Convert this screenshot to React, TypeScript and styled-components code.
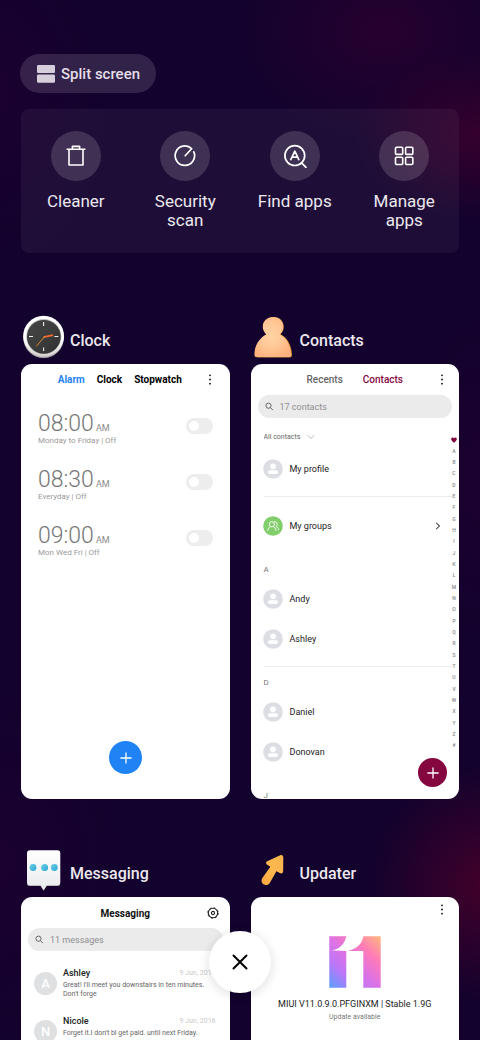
import React from "react";
import styled, { createGlobalStyle } from "styled-components";

const GlobalStyle = createGlobalStyle`
  * { box-sizing: border-box; }
  html, body, #root { height: 100%; }
  body {
    margin: 0;
    overflow: hidden;
    background: #12022d;
    font-family: Roboto, "Noto Sans", sans-serif;
  }
  button, input, select { font-family: inherit; }
  button { border: 0; padding: 0; background: none; color: inherit; cursor: pointer; }
  h1, h2, h3, p, ul { margin: 0; padding: 0; }
  svg { display: block; flex: none; }
`;

const Screen = styled.main`
  position: relative;
  height: 100vh;
  overflow: hidden;
  padding: 54px 21px 0;
  color: #fff;
  background:
    radial-gradient(ellipse 130px 85px at 101% 13%, rgba(64, 0, 44, 0.8), transparent),
    radial-gradient(ellipse 150px 110px at 80% 3%, rgba(46, 0, 48, 0.75), transparent),
    radial-gradient(ellipse 120px 120px at 102% 85%, rgba(72, 0, 42, 0.9), transparent),
    radial-gradient(ellipse 110px 180px at 0% 9%, rgba(30, 0, 48, 0.7), transparent),
    radial-gradient(ellipse 140px 200px at 0% 83%, rgba(30, 0, 48, 0.7), transparent),
    radial-gradient(ellipse 80px 180px at 100% 46%, rgba(32, 0, 48, 0.7), transparent),
    #12022d;
`;

const SplitButton = styled.button`
  display: flex;
  align-items: center;
  gap: 6px;
  height: 39px;
  margin-left: -1px;
  padding: 0 16px 0 17px;
  border-radius: 20px;
  background: rgba(255, 255, 255, 0.13);
  color: #e4dfe8;
  font-size: 15px;
  font-weight: 500;
`;

const ToolPanel = styled.section`
  display: grid;
  grid-template-columns: repeat(4, 1fr);
  height: 144px;
  margin-top: 16px;
  padding-top: 22px;
  border-radius: 8px;
  background: rgba(255, 255, 255, 0.05);
`;

const Tool = styled.button`
  display: flex;
  flex-direction: column;
  align-items: center;
  gap: 11px;
  color: #ece8ef;
  font-size: 17px;
  line-height: 19px;
`;

const ToolCircle = styled.span`
  display: grid;
  place-items: center;
  width: 50px;
  height: 50px;
  border-radius: 50%;
  background: rgba(255, 255, 255, 0.15);
`;

const ToolLabel = styled.span`
  max-width: 80px;
`;

const AppGrid = styled.div`
  display: grid;
  grid-template-columns: 1fr 1fr;
  gap: 49px 21px;
  margin-top: 62px;
`;

const AppHeader = styled.header`
  display: flex;
  align-items: center;
  gap: 4px;
  height: 49px;
  padding: 0 0 5px 1px;
`;

const AppName = styled.h2`
  padding-top: 8px;
  color: #ece8ef;
  font-size: 16px;
  font-weight: 500;
  line-height: 20px;
`;

const Card = styled.article`
  position: relative;
  height: 435px;
  overflow: hidden;
  border-radius: 11px;
  background: #fff;
  color: #222;
`;

const TopBar = styled.div`
  display: flex;
  align-items: center;
  justify-content: center;
  height: 31px;
  padding-top: 1px;
`;

const Tabs = styled.nav<{ $gap: number; $shift?: number }>`
  display: flex;
  gap: ${(p) => p.$gap}px;
  padding-right: ${(p) => p.$shift ?? 0}px;
`;

const Tab = styled.button<{ $color: string; $weight: number }>`
  color: ${(p) => p.$color};
  font-size: 10px;
  font-weight: ${(p) => p.$weight};
  line-height: 14px;
`;

const BarAction = styled.button<{ $right: number; $top?: number }>`
  position: absolute;
  top: ${(p) => p.$top ?? 9}px;
  right: ${(p) => p.$right}px;
`;

const BarTitle = styled.h3`
  color: #111;
  font-size: 10px;
  font-weight: 700;
`;

const Fab = styled.button<{ $color: string; $size: number }>`
  display: grid;
  place-items: center;
  width: ${(p) => p.$size}px;
  height: ${(p) => p.$size}px;
  border-radius: 50%;
  background: ${(p) => p.$color};
`;

const ClockFab = styled(Fab)`
  position: absolute;
  bottom: 25px;
  left: 50%;
  margin-left: -16px;
`;

const ContactFab = styled(Fab)`
  position: absolute;
  right: 12px;
  bottom: 12px;
`;

const AlarmList = styled.ul`
  list-style: none;
  padding: 17px 17px 0;
`;

const Alarm = styled.li`
  display: flex;
  align-items: flex-start;
  justify-content: space-between;
  height: 56px;
  color: #777;
`;

const AlarmTime = styled.div`
  display: flex;
  align-items: baseline;
  gap: 2px;
  height: 24px;
  font-size: 23px;
  font-weight: 300;
  line-height: 24px;
`;

const Meridiem = styled.span`
  color: #8a8a8a;
  font-size: 9px;
  font-weight: 400;
  line-height: 10px;
`;

const AlarmNote = styled.p`
  color: #999;
  font-size: 8px;
  line-height: 10px;
`;

const Toggle = styled.input`
  appearance: none;
  display: flex;
  align-items: center;
  width: 27px;
  height: 16px;
  margin: 6px 0 0;
  padding: 0 3px;
  border-radius: 8px;
  background: #ededed;
  &::before {
    content: "";
    width: 10px;
    height: 10px;
    border-radius: 50%;
    background: #fff;
  }
  &:checked { justify-content: flex-end; background: #1f82f5; }
`;

const SearchBox = styled.label`
  display: flex;
  align-items: center;
  gap: 6px;
  height: 23px;
  margin: 0 7px;
  padding: 0 7px;
  border-radius: 12px;
  background: #ebebeb;
`;

const SearchInput = styled.input`
  flex: 1;
  min-width: 0;
  padding: 0;
  border: 0;
  outline: 0;
  background: none;
  color: #333;
  font-size: 9px;
  &::placeholder { color: #8f8f8f; opacity: 1; }
`;

const Filter = styled.label`
  display: flex;
  align-items: center;
  gap: 6px;
  height: 14px;
  margin: 12px 0 0 13px;
`;

const FilterSelect = styled.select`
  appearance: none;
  padding: 0;
  border: 0;
  background: none;
  color: #666;
  font-size: 7px;
`;

const Group = styled.section<{ $first?: boolean; $line?: boolean }>`
  margin: 0 6px 0 13px;
  padding: ${(p) => (p.$first ? 5 : 9)}px 0 7px;
  border-bottom: 1px solid ${(p) => (p.$line ? "#ececec" : "transparent")};
`;

const GroupLetter = styled.h3`
  margin-bottom: 2px;
  color: #777;
  font-size: 8px;
  font-weight: 400;
  line-height: 14px;
`;

const Contact = styled.div`
  display: flex;
  align-items: center;
  gap: 7px;
  height: 40px;
  margin-left: -1px;
  padding-right: 12px;
  color: #222;
  font-size: 9px;
`;

const ContactName = styled.span`
  flex: 1;
`;

const LetterIndex = styled.nav`
  position: absolute;
  top: 70px;
  right: 0;
  display: flex;
  flex-direction: column;
  align-items: center;
  justify-content: space-between;
  width: 10px;
  height: 317px;
`;

const IndexLink = styled.a`
  display: grid;
  place-items: center;
  height: 11px;
  color: #888;
  font-size: 5px;
  font-weight: 500;
  text-decoration: none;
`;

const MessageList = styled.ul`
  list-style: none;
  padding: 8px 14px 0 13px;
`;

const Message = styled.li`
  display: flex;
  align-items: center;
  gap: 6px;
  height: 48px;
`;

const Initial = styled.span`
  display: grid;
  place-items: center;
  flex: none;
  width: 23px;
  height: 23px;
  border-radius: 50%;
  background: #dfe0e2;
  color: #fff;
  font-size: 13px;
  font-weight: 500;
`;

const MessageBody = styled.div`
  flex: 1;
  min-width: 0;
  height: 34px;
`;

const MessageTop = styled.div`
  display: flex;
  align-items: center;
  justify-content: space-between;
  line-height: 14px;
`;

const Sender = styled.h3`
  color: #222;
  font-size: 9px;
  font-weight: 500;
`;

const MessageDate = styled.time`
  color: #c8c8c8;
  font-size: 7px;
`;

const MessageText = styled.p`
  margin-top: 1px;
  color: #666;
  font-size: 7px;
  line-height: 9px;
`;

const Update = styled.div`
  display: flex;
  flex-direction: column;
  align-items: center;
  padding-top: 8px;
`;

const Version = styled.p`
  margin-top: 9px;
  color: #222;
  font-size: 9px;
  line-height: 14px;
`;

const UpdateState = styled.p`
  color: #777;
  font-size: 7px;
  line-height: 12px;
`;

const CloseAll = styled.button`
  position: absolute;
  bottom: 47px;
  left: 50%;
  display: grid;
  place-items: center;
  width: 62px;
  height: 62px;
  margin-left: -31px;
  border-radius: 50%;
  background: #fff;
  box-shadow: 0 2px 12px rgba(0, 0, 0, 0.14);
`;

const SplitIcon = () => (
  <svg width="18" height="18" viewBox="0 0 18 18" fill="#d6cfdb">
    <rect width="18" height="8" rx="1.3" />
    <rect y="9.6" width="18" height="8.2" rx="1.3" />
  </svg>
);

const TrashIcon = () => (
  <svg width="24" height="24" viewBox="0 0 24 24" fill="none" stroke="#fff" strokeWidth="1.6" strokeLinejoin="round">
    <path d="M2.6 5.2H21.4M5 5.2V21H19V5.2M8.4 5V2.4H15.6V5" />
  </svg>
);

const ScanIcon = () => (
  <svg width="24" height="24" viewBox="0 0 24 24" fill="none" stroke="#fff" strokeWidth="1.7" strokeLinecap="round" strokeLinejoin="round">
    <path d="M12.200 11.700L18.600 4.700A9.700 9.700 0 1 0 20.800 7.900" />
  </svg>
);

const FindIcon = () => (
  <svg width="24" height="24" viewBox="0 0 24 24" fill="none" stroke="#fff" strokeWidth="1.7" strokeLinecap="round" strokeLinejoin="round">
    <circle cx="11.8" cy="11.6" r="9.9" />
    <path d="M18.600 18.800L23 23.300M7.800 15.600L11.800 7.200L15.800 15.600M9.100 13.200H14.500" />
  </svg>
);

const ManageIcon = () => (
  <svg width="24" height="24" viewBox="0 0 24 24" fill="none" stroke="#fff" strokeWidth="1.6">
    <rect x="3.5" y="3.2" width="7.2" height="7.2" rx="1" />
    <rect x="13.6" y="3.2" width="7.2" height="7.2" rx="1" />
    <rect x="3.5" y="13.3" width="7.2" height="7.2" rx="1" />
    <rect x="13.6" y="13.3" width="7.2" height="7.2" rx="1" />
  </svg>
);

const ClockLogo = () => (
  <svg width="44" height="44" viewBox="0 0 44 44">
    <defs>
      <linearGradient id="rim" x1="0" y1="0" x2="0" y2="1">
        <stop offset="0.6" stopColor="#fff" />
        <stop offset="1" stopColor="#d2ceca" />
      </linearGradient>
      <linearGradient id="face" x1="0" y1="0" x2="1" y2="1">
        <stop offset="0" stopColor="#444" />
        <stop offset="0.5" stopColor="#3d3d3d" />
        <stop offset="1" stopColor="#303030" />
      </linearGradient>
    </defs>
    <ellipse cx="21.6" cy="22.2" rx="20.4" ry="20.9" fill="#a9a5a5" />
    <ellipse cx="21.6" cy="21.2" rx="20.4" ry="20.5" fill="url(#rim)" />
    <circle cx="21.8" cy="21.6" r="17.5" fill="#bdbdbd" />
    <circle cx="21.8" cy="21.8" r="16.9" fill="url(#face)" />
    <path d="M21.6 7V11M21.6 32.5V36M7 21.5H11M32.4 21.5H36.4" stroke="#eee" strokeWidth="1.1" />
    <path d="M21.5 22.2L31 20.2" stroke="#f26a2b" strokeWidth="1.7" />
    <path d="M23 21L14.5 31.2" stroke="#d98a35" strokeWidth="1" />
  </svg>
);

const PersonLogo = () => (
  <svg width="44" height="44" viewBox="0 0 44 44">
    <defs>
      <radialGradient id="skin" cx="0.45" cy="0.45" r="0.6">
        <stop offset="0" stopColor="#ffd3a4" />
        <stop offset="0.55" stopColor="#ffc795" />
        <stop offset="1" stopColor="#ffb27e" />
      </radialGradient>
    </defs>
    <path
      d="M21.6 2C15.6 2 11.2 6.3 11.2 11.6C11.2 15 12.8 17.6 14.6 19.4C7.6 23.2 3.4 30.4 3.2 39.4C3.2 41.4 4.2 42.4 6 42.4H37.2C39.4 42.4 40.2 41.4 40 39.2C39.4 29.8 35.2 22.8 28.6 19.3C30.4 17.6 31.8 15 31.8 11.6C31.8 6.2 27.4 2 21.6 2Z"
      fill="#d08a36"
    />
    <path
      d="M21.2 2C15.200 2 10.800 6.300 10.800 11.600C10.800 15 12.400 17.600 14.200 19.400C7 23.200 2.600 30.400 2.400 39.400C2.400 41.200 3.200 42 5 42H36.600C38.600 42 39.300 41 39.100 39.200C38.500 29.800 34.200 22.800 27.900 19.300C29.800 17.600 31.200 15 31.200 11.600C31.200 6.200 27 2 21.200 2Z"
      fill="url(#skin)"
    />
  </svg>
);

const BubbleLogo = () => (
  <svg width="44" height="44" viewBox="0 0 44 44">
    <defs>
      <linearGradient id="bubble" x1="0" y1="0" x2="0" y2="1">
        <stop offset="0" stopColor="#fff" />
        <stop offset="1" stopColor="#e9eaec" />
      </linearGradient>
      <linearGradient id="dot" x1="0" y1="0" x2="1" y2="1">
        <stop offset="0" stopColor="#6fd0e4" />
        <stop offset="1" stopColor="#2aa5d4" />
      </linearGradient>
    </defs>
    <path d="M5 35.5H38.3Q38 38 35.4 38H24.6L21.6 42.8L18.6 38H8Q5.200 38 5 35.500Z" fill="#bcbcc0" />
    <path d="M8 2.200H35.300Q38.300 2.200 38.300 5.200V34.200Q38.300 37 35.300 37H24.800L21.600 42L18.400 37H8Q5 37 5 34.200V5.200Q5 2.200 8 2.200Z" fill="url(#bubble)" />
    <circle cx="11" cy="19.500" r="3.400" fill="url(#dot)" />
    <circle cx="22.600" cy="19.500" r="3.500" fill="url(#dot)" />
    <circle cx="32.300" cy="19.500" r="3.400" fill="url(#dot)" />
  </svg>
);

const ArrowLogo = () => (
  <svg width="44" height="44" viewBox="0 0 44 44">
    <defs>
      <linearGradient id="arrow" x1="0" y1="1" x2="1" y2="0">
        <stop offset="0" stopColor="#ffa73f" />
        <stop offset="0.500" stopColor="#ffb84e" />
        <stop offset="1" stopColor="#f4b44c" />
      </linearGradient>
    </defs>
    <path
      d="M28.200 7.200L15.200 13.200C13.600 14.200 13.700 15.800 15.200 16.700L18.400 18.800L10.500 29.800C8.800 32.400 9.400 35 11.400 36.300C13.800 37.800 16.400 37.200 17.900 34.800L24.400 23.200L27.800 25.100C29.800 25.900 31.200 25 31.200 22.800L31.300 9.600C31.200 7.200 29.900 6.400 28.200 7.200Z"
      fill="url(#arrow)"
    />
  </svg>
);

const MoreIcon = () => (
  <svg width="4" height="13" viewBox="0 0 4 13" fill="#111">
    <circle cx="2" cy="2.300" r="0.900" />
    <circle cx="2" cy="6.500" r="0.900" />
    <circle cx="2" cy="10.700" r="0.900" />
  </svg>
);

const GearIcon = () => (
  <svg width="14" height="14" viewBox="0 0 14 14" fill="none" stroke="#222">
    <circle cx="7" cy="7" r="4.700" strokeWidth="1.100" />
    <circle cx="7" cy="7" r="5.300" strokeWidth="0.900" strokeDasharray="1.900 2.262" />
    <circle cx="7" cy="7" r="1.600" strokeWidth="1.100" />
  </svg>
);

const SearchIcon = () => (
  <svg width="9" height="9" viewBox="0 0 9 9" fill="none" stroke="#666" strokeWidth="1">
    <circle cx="3.500" cy="3.700" r="2.600" />
    <path d="M5.400 5.600L7.900 8.100" />
  </svg>
);

const DownIcon = () => (
  <svg width="8" height="6" viewBox="0 0 8 6" fill="none" stroke="#aaa" strokeWidth="0.800">
    <path d="M0.600 1.200L4 4.600L7.400 1.200" />
  </svg>
);

const RightIcon = () => (
  <svg width="6" height="8" viewBox="0 0 6 8" fill="none" stroke="#555" strokeWidth="1.100">
    <path d="M1.200 0.800L4.500 4L1.200 7.200" />
  </svg>
);

const PlusIcon = ({ size }: { size: number }) => (
  <svg width={size} height={size} viewBox="0 0 12 12" stroke="#fff" strokeWidth="1.300">
    <path d="M6 0.400V11.600M0.400 6H11.600" />
  </svg>
);

const Avatar = () => (
  <svg width="20" height="20" viewBox="0 0 20 20">
    <circle cx="10" cy="10" r="9.800" fill="#dcdee4" />
    <circle cx="10" cy="7.300" r="2.900" fill="#fff" />
    <rect x="5" y="11.200" width="10" height="3.800" rx="1.800" fill="#fff" />
  </svg>
);

const GroupAvatar = () => (
  <svg width="20" height="20" viewBox="0 0 20 20" fill="none" stroke="#fff" strokeWidth="0.900" strokeLinecap="round">
    <circle cx="10" cy="10" r="9.800" fill="#82cd6c" stroke="none" />
    <circle cx="8.900" cy="8.300" r="2.600" />
    <path d="M4.900 14.400C5.100 12.400 6 11.200 7.300 10.700M10.500 10.700C11.800 11.200 12.800 12.400 13 14.400M11 5.900C13 5.200 14.500 6.600 14.200 8.400C14.100 9.300 13.700 9.900 13 10.400C14.400 11 15.300 12 15.500 13.500" />
  </svg>
);

const HeartIcon = () => (
  <svg width="6" height="6" viewBox="0 0 6 6" fill="#85073f">
    <path d="M3 5.800C1.200 4.400 0.200 3.300 0.200 2C0.200 0.400 2.100 0 3 1.200C3.900 0 5.800 0.400 5.800 2C5.800 3.300 4.800 4.400 3 5.800Z" />
  </svg>
);

const ElevenLogo = () => (
  <svg width="52" height="52" viewBox="0 0 52 52" role="img" aria-label="MIUI 11">
    <defs>
      <linearGradient id="eleven" gradientUnits="userSpaceOnUse" x1="2" y1="52" x2="50" y2="2">
        <stop offset="0" stopColor="#5c9dff" />
        <stop offset="0.280" stopColor="#bd76f8" />
        <stop offset="0.500" stopColor="#dc72e4" />
        <stop offset="0.750" stopColor="#ff7bb8" />
        <stop offset="1" stopColor="#ffb283" />
      </linearGradient>
    </defs>
    <path
      d="M0.300 0.300H17.300C16 7 11 13.600 2.800 14.300H0.300ZM0.300 14.300L17.300 15V51.700H0.300ZM34.300 0.300H51.700V51.700H34.300V14.900H19C28 13.200 33.400 7.200 34.300 0.300Z"
      fill="url(#eleven)"
    />
  </svg>
);

const CloseIcon = () => (
  <svg width="16" height="16" viewBox="0 0 16 16" stroke="#000" strokeWidth="2" strokeLinecap="round">
    <path d="M1.500 1.500L14.500 14.500M14.500 1.500L1.500 14.500" />
  </svg>
);

const tools = [
  { label: "Cleaner", icon: <TrashIcon /> },
  { label: "Security scan", icon: <ScanIcon /> },
  { label: "Find apps", icon: <FindIcon /> },
  { label: "Manage apps", icon: <ManageIcon /> },
];

const alarms = [
  { time: "08:00", note: "Monday to Friday | Off" },
  { time: "08:30", note: "Everyday | Off" },
  { time: "09:00", note: "Mon Wed Fri | Off" },
];

const contactGroups = [
  { letter: "A", names: ["Andy", "Ashley"], line: true },
  { letter: "D", names: ["Daniel", "Donovan"], line: false },
  { letter: "J", names: [], line: false },
];

const messages = [
  { from: "Ashley", text: "Great! I'll meet you downstairs in ten minutes. Don't forge" },
  { from: "Nicole", text: "Forget it.I don't bl get paid. until next Friday." },
];

const AppWindow = ({ name, logo, children }: { name: string; logo: React.ReactNode; children: React.ReactNode }) => (
  <section>
    <AppHeader>
      {logo}
      <AppName>{name}</AppName>
    </AppHeader>
    <Card>{children}</Card>
  </section>
);

const MoreButton = ({ right, top }: { right: number; top?: number }) => (
  <BarAction $right={right} $top={top} aria-label="More options">
    <MoreIcon />
  </BarAction>
);

const ClockApp = () => (
  <>
    <TopBar>
      <Tabs $gap={12} $shift={11}>
        <Tab $color="#1f82f5" $weight={700}>Alarm</Tab>
        <Tab $color="#000" $weight={700}>Clock</Tab>
        <Tab $color="#000" $weight={700}>Stopwatch</Tab>
      </Tabs>
      <MoreButton right={18} />
    </TopBar>
    <AlarmList>
      {alarms.map((a) => (
        <Alarm key={a.time}>
          <div>
            <AlarmTime>
              {a.time}
              <Meridiem>AM</Meridiem>
            </AlarmTime>
            <AlarmNote>{a.note}</AlarmNote>
          </div>
          <Toggle type="checkbox" aria-label={`Alarm ${a.time}`} />
        </Alarm>
      ))}
    </AlarmList>
    <ClockFab $color="#1f82f5" $size={33} aria-label="Add alarm">
      <PlusIcon size={12} />
    </ClockFab>
  </>
);

const ContactsApp = () => (
  <>
    <TopBar>
      <Tabs $gap={20}>
        <Tab $color="#666" $weight={500}>Recents</Tab>
        <Tab $color="#85073f" $weight={500}>Contacts</Tab>
      </Tabs>
      <MoreButton right={15} />
    </TopBar>
    <SearchBox>
      <SearchIcon />
      <SearchInput type="search" placeholder="17 contacts" aria-label="Search contacts" />
    </SearchBox>
    <Filter>
      <FilterSelect aria-label="Contact filter">
        <option>All contacts</option>
      </FilterSelect>
      <DownIcon />
    </Filter>
    <Group $first $line>
      <Contact>
        <Avatar />
        <ContactName>My profile</ContactName>
      </Contact>
    </Group>
    <Group>
      <Contact>
        <GroupAvatar />
        <ContactName>My groups</ContactName>
        <RightIcon />
      </Contact>
    </Group>
    {contactGroups.map((g) => (
      <Group key={g.letter} $line={g.line}>
        <GroupLetter>{g.letter}</GroupLetter>
        {g.names.map((n) => (
          <Contact key={n}>
            <Avatar />
            <ContactName>{n}</ContactName>
          </Contact>
        ))}
      </Group>
    ))}
    <LetterIndex aria-label="Jump to letter">
      <IndexLink href="#favourites" aria-label="Favourites">
        <HeartIcon />
      </IndexLink>
      {"ABCDEFGHIJKLMNOPQRSTUVWXYZ#".split("").map((l) => (
        <IndexLink key={l} href={`#${l}`}>{l}</IndexLink>
      ))}
    </LetterIndex>
    <ContactFab $color="#85073f" $size={29} aria-label="Add contact">
      <PlusIcon size={12} />
    </ContactFab>
  </>
);

const MessagingApp = () => (
  <>
    <TopBar>
      <BarTitle>Messaging</BarTitle>
      <BarAction $right={10} aria-label="Settings">
        <GearIcon />
      </BarAction>
    </TopBar>
    <SearchBox>
      <SearchIcon />
      <SearchInput type="search" placeholder="11 messages" aria-label="Search messages" />
    </SearchBox>
    <MessageList>
      {messages.map((m) => (
        <Message key={m.from}>
          <Initial>{m.from[0]}</Initial>
          <MessageBody>
            <MessageTop>
              <Sender>{m.from}</Sender>
              <MessageDate>9 Jun, 2016</MessageDate>
            </MessageTop>
            <MessageText>{m.text}</MessageText>
          </MessageBody>
        </Message>
      ))}
    </MessageList>
  </>
);

const UpdaterApp = () => (
  <>
    <TopBar>
      <MoreButton right={15} top={6} />
    </TopBar>
    <Update>
      <ElevenLogo />
      <Version>MIUI V11.0.9.0.PFGINXM | Stable 1.9G</Version>
      <UpdateState>Update available</UpdateState>
    </Update>
  </>
);

export default function App() {
  return (
    <>
      <GlobalStyle />
      <Screen>
        <SplitButton>
          <SplitIcon />
          Split screen
        </SplitButton>
        <ToolPanel aria-label="Tools">
          {tools.map((t) => (
            <Tool key={t.label}>
              <ToolCircle>{t.icon}</ToolCircle>
              <ToolLabel>{t.label}</ToolLabel>
            </Tool>
          ))}
        </ToolPanel>
        <AppGrid>
          <AppWindow name="Clock" logo={<ClockLogo />}>
            <ClockApp />
          </AppWindow>
          <AppWindow name="Contacts" logo={<PersonLogo />}>
            <ContactsApp />
          </AppWindow>
          <AppWindow name="Messaging" logo={<BubbleLogo />}>
            <MessagingApp />
          </AppWindow>
          <AppWindow name="Updater" logo={<ArrowLogo />}>
            <UpdaterApp />
          </AppWindow>
        </AppGrid>
        <CloseAll aria-label="Close all apps">
          <CloseIcon />
        </CloseAll>
      </Screen>
    </>
  );
}
